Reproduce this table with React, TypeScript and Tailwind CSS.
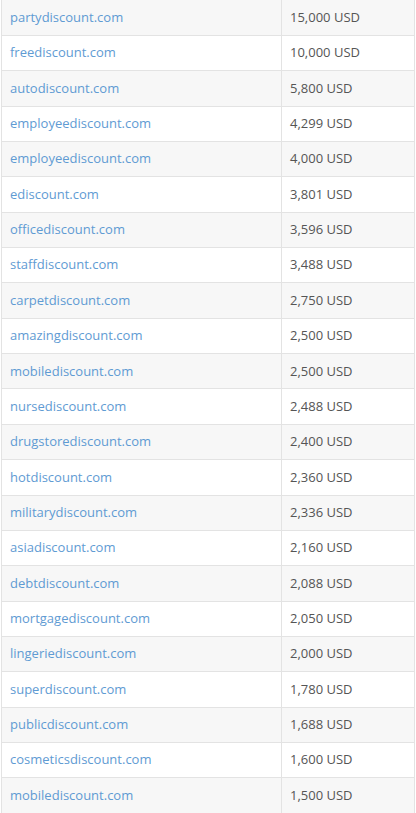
import React from 'react';

const rows: [string, string][] = [
  ['partydiscount.com', '15,000 USD'],
  ['freediscount.com', '10,000 USD'],
  ['autodiscount.com', '5,800 USD'],
  ['employeediscount.com', '4,299 USD'],
  ['employeediscount.com', '4,000 USD'],
  ['ediscount.com', '3,801 USD'],
  ['officediscount.com', '3,596 USD'],
  ['staffdiscount.com', '3,488 USD'],
  ['carpetdiscount.com', '2,750 USD'],
  ['amazingdiscount.com', '2,500 USD'],
  ['mobilediscount.com', '2,500 USD'],
  ['nursediscount.com', '2,488 USD'],
  ['drugstorediscount.com', '2,400 USD'],
  ['hotdiscount.com', '2,360 USD'],
  ['militarydiscount.com', '2,336 USD'],
  ['asiadiscount.com', '2,160 USD'],
  ['debtdiscount.com', '2,088 USD'],
  ['mortgagediscount.com', '2,050 USD'],
  ['lingeriediscount.com', '2,000 USD'],
  ['superdiscount.com', '1,780 USD'],
  ['publicdiscount.com', '1,688 USD'],
  ['cosmeticsdiscount.com', '1,600 USD'],
  ['mobilediscount.com', '1,500 USD'],
];

export default function App() {
  return (
    <div className="w-[416px] h-[813px] overflow-hidden bg-white font-['Open_Sans',sans-serif] text-[13px]">
      <table className="w-[414px] ml-[1px] border-collapse">
        <tbody>
          {rows.map(([domain, price], i) => (
            <tr key={i} className={i % 2 === 0 ? 'h-[35.36px] bg-[#f7f7f7]' : 'h-[35.36px] bg-white'}>
              <td className="w-[280px] border border-t-0 border-[#e3e3e3] pl-2 py-0 align-middle">
                <a className="text-[#5f9bd3]">{domain}</a>
              </td>
              <td className="border border-t-0 border-[#e3e3e3] pl-2 py-0 align-middle text-[#555]">
                {price}
              </td>
            </tr>
          ))}
        </tbody>
      </table>
    </div>
  );
}
